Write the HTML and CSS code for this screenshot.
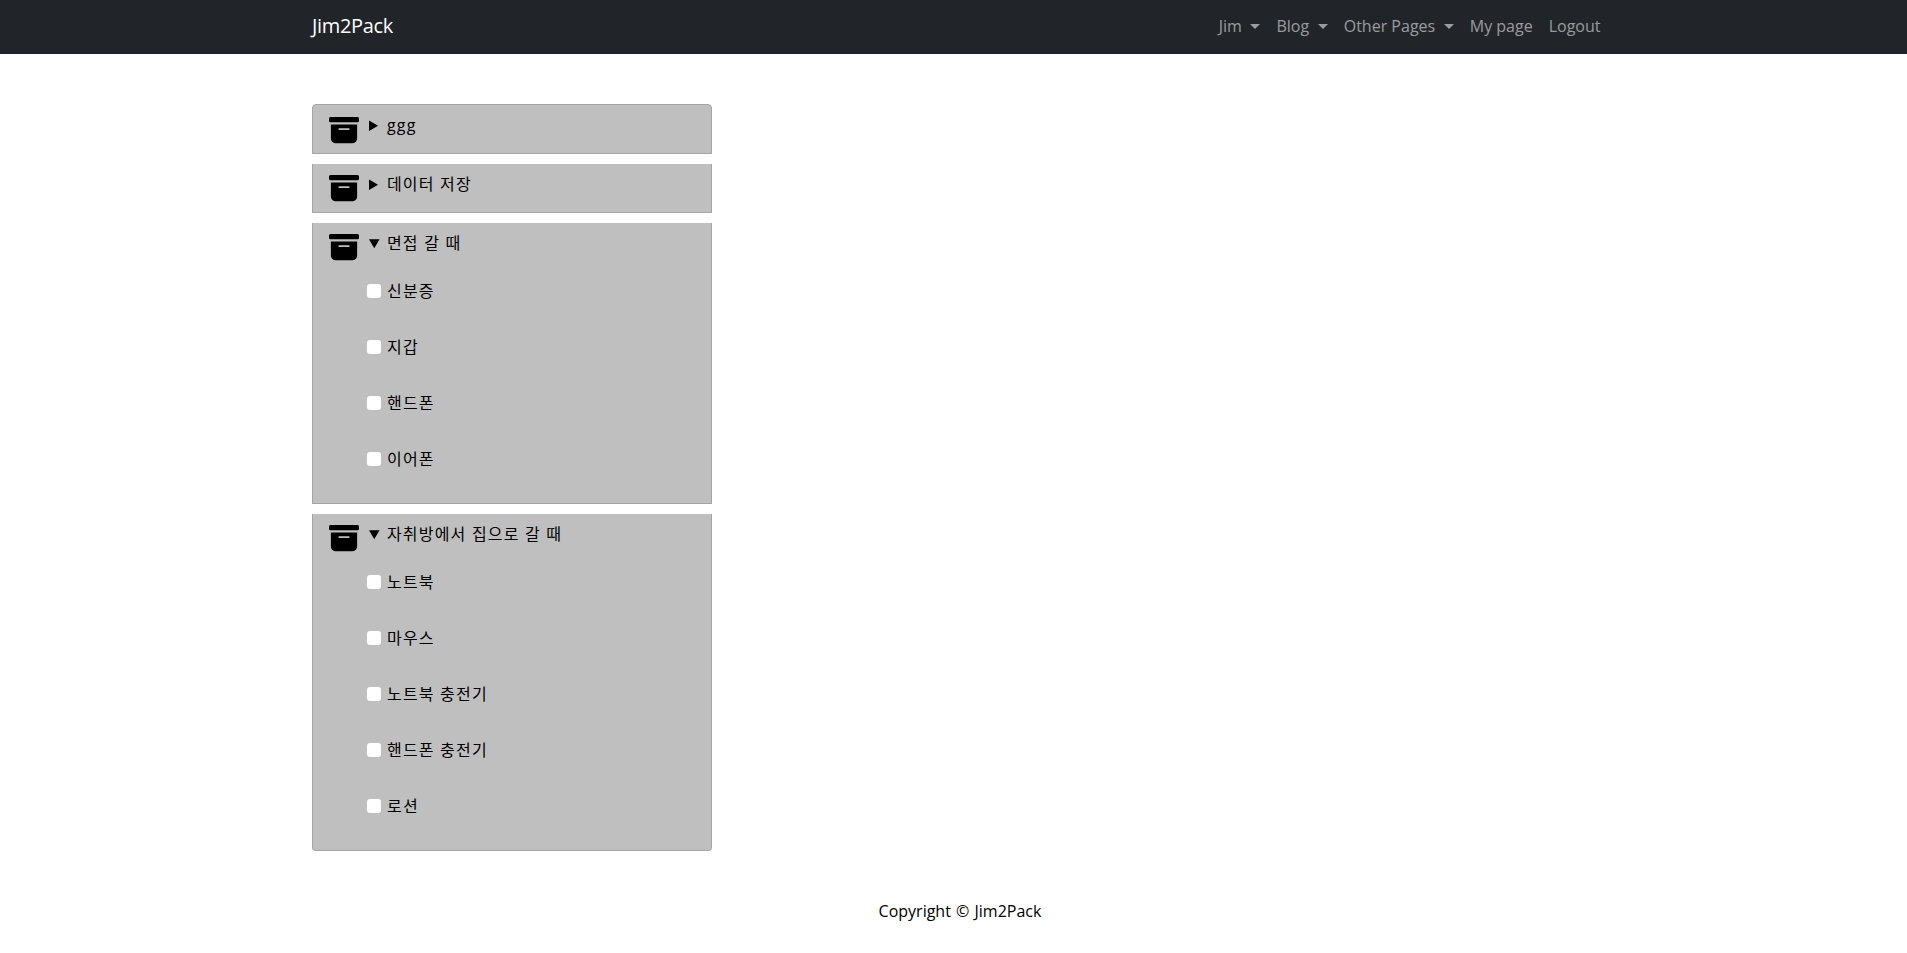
FILE: index.html
```html
<!DOCTYPE html>
<html lang="ko">
<head>
<meta charset="utf-8">
<title>Jim2Pack</title>
<link rel="stylesheet" href="styles.css">
</head>
<body>
<svg class="defs" width="0" height="0" aria-hidden="true">
  <symbol id="archive" viewBox="0 0 16 16"><path d="M12.643 15C13.979 15 15 13.845 15 12.5V5H1v7.5C1 13.845 2.021 15 3.357 15h9.286zM5.5 7h5a.5.5 0 0 1 0 1h-5a.5.5 0 0 1 0-1zM.8 1a.8.8 0 0 0-.8.8V3a.8.8 0 0 0 .8.8h14.4A.8.8 0 0 0 16 3V1.8a.8.8 0 0 0-.8-.8H.8z"/></symbol>
</svg>
<nav class="navbar">
  <div class="nav-inner">
    <a class="brand" href="#">Jim2Pack</a>
    <ul class="nav-links">
      <li><a class="nav-link caret" href="#">Jim</a></li>
      <li><a class="nav-link caret" href="#">Blog</a></li>
      <li><a class="nav-link caret" href="#">Other Pages</a></li>
      <li><a class="nav-link" href="#">My page</a></li>
      <li><a class="nav-link" href="#">Logout</a></li>
    </ul>
  </div>
</nav>
<main class="main">
  <div class="pack-list">
    <section class="pack pack-short pack-first">
      <svg class="pack-icon"><use href="#archive"/></svg>
      <details><summary><span class="label">ggg</span></summary></details>
    </section>
    <section class="pack pack-short">
      <svg class="pack-icon"><use href="#archive"/></svg>
      <details><summary><span class="label">데이터 저장</span></summary></details>
    </section>
    <section class="pack">
      <svg class="pack-icon"><use href="#archive"/></svg>
      <details open>
        <summary><span class="label">면접 갈 때</span></summary>
        <div class="items">
          <label class="item"><input type="checkbox"><span>신분증</span></label>
          <label class="item"><input type="checkbox"><span>지갑</span></label>
          <label class="item"><input type="checkbox"><span>핸드폰</span></label>
          <label class="item"><input type="checkbox"><span>이어폰</span></label>
        </div>
      </details>
    </section>
    <section class="pack pack-last">
      <svg class="pack-icon"><use href="#archive"/></svg>
      <details open>
        <summary><span class="label">자취방에서 집으로 갈 때</span></summary>
        <div class="items">
          <label class="item"><input type="checkbox"><span>노트북</span></label>
          <label class="item"><input type="checkbox"><span>마우스</span></label>
          <label class="item"><input type="checkbox"><span>노트북 충전기</span></label>
          <label class="item"><input type="checkbox"><span>핸드폰 충전기</span></label>
          <label class="item"><input type="checkbox"><span>로션</span></label>
        </div>
      </details>
    </section>
  </div>
</main>
<footer class="footer">Copyright © Jim2Pack</footer>
</body>
</html>
```
FILE: styles.css
```css
* { box-sizing: border-box; }
html, body { margin: 0; padding: 0; }
body {
  background: #fff;
  color: #000;
  font-family: "Open Sans", "Noto Sans CJK KR", sans-serif;
  font-size: 16px;
  line-height: 24px;
}
.defs { position: absolute; }
a { text-decoration: none; }

.navbar { background: #212529; height: 54px; }
.nav-inner {
  width: 1320px;
  height: 100%;
  margin: 0 auto;
  padding: 0 13px 2px 18.5px;
  display: flex;
  align-items: center;
  justify-content: space-between;
}
.brand { color: #fff; font-size: 20px; line-height: 30px; letter-spacing: -0.35px; }
.nav-links { display: flex; gap: 16px; margin: 0; padding: 0; list-style: none; }
.nav-link { color: rgba(255, 255, 255, .55); display: flex; align-items: center; }
.caret::after {
  content: "";
  margin-left: 8.6px;
  border-top: 5px solid;
  border-left: 5px solid transparent;
  border-right: 5px solid transparent;
}

.main { width: 1320px; margin: 0 auto; padding: 50px 18.5px 0; }
.pack-list { width: 400px; display: flex; flex-direction: column; gap: 10px; }
.pack {
  display: flex;
  align-items: flex-start;
  background: #bfbfbf;
  border: 1px solid #a5a5a5;
  border-width: 0 1px 1px;
  padding: 9px 16px 9.5px;
}
.pack-short { padding-bottom: 9px; }
.pack-first { border-top-width: 1px; border-radius: 4px 4px 0 0; }
.pack-first .pack-icon { margin: 1px 0 -1px; }
.pack-last { border-radius: 0 0 4px 4px; }
.pack-icon { width: 30px; height: 30px; flex: none; fill: #000; }
details { margin-left: 10px; flex: 1; letter-spacing: 1.2px; }
summary { list-style: inside disclosure-closed; cursor: pointer; height: 24px; margin-top: -1px; }
details[open] summary { list-style-type: disclosure-open; }
.label { margin-left: 1px; }
.items { display: flex; flex-direction: column; gap: 32px; margin-left: -2px; padding-top: 24px; padding-bottom: 22.5px; }
.item { display: flex; align-items: center; gap: 6px; height: 24px; }
.item input {
  appearance: none;
  width: 14px;
  height: 14px;
  margin: 0;
  background: #fff;
  border-radius: 3px;
}
.footer { text-align: center; margin-top: 48px; padding-left: 13px; word-spacing: 1px; }
```
